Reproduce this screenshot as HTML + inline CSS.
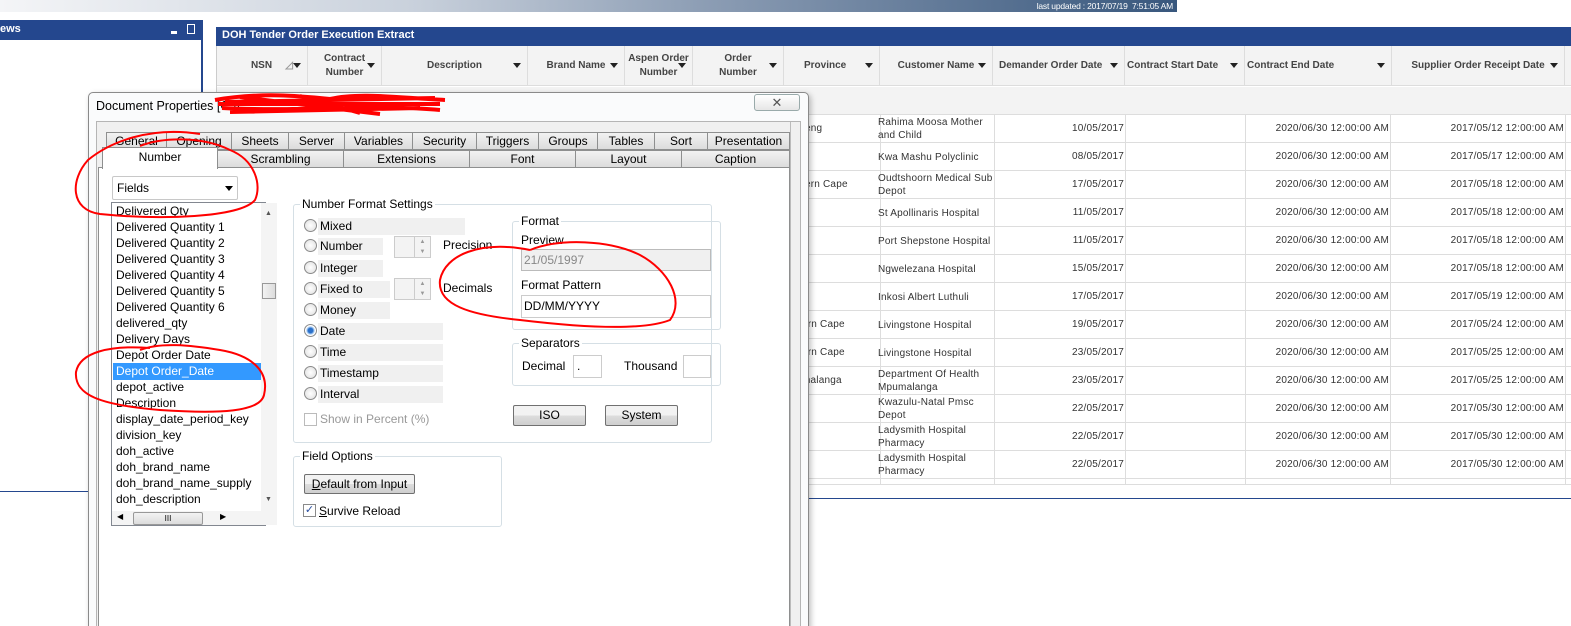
<!DOCTYPE html>
<html><head><meta charset="utf-8"><style>
*{box-sizing:border-box;margin:0;padding:0}
html,body{width:1571px;height:626px;overflow:hidden}
body{position:relative;background:#fff;font-family:"Liberation Sans",sans-serif;font-size:12px;color:#000}
.a{position:absolute}
.g{font-size:10px;color:#333;letter-spacing:0.2px}
.hd{position:absolute;top:46px;height:40px;border-right:1px solid #ddd;display:flex;align-items:center;justify-content:center;text-align:center;font-weight:bold;font-size:10px;color:#444;line-height:14px}
.arr{position:absolute;right:6px;top:17px;width:0;height:0;border-left:4px solid transparent;border-right:4px solid transparent;border-top:5px solid #222}
.tab{position:absolute;height:18px;border:1px solid #8e8f8f;background:linear-gradient(#f2f2f2,#dcdcdc);text-align:center;font-size:12px;line-height:16px}
.rad{position:absolute;left:304px;width:13px;height:13px;border-radius:50%;border:1px solid #8a8a8a;background:radial-gradient(#fff,#ddd)}
.rl{position:absolute;left:318px;height:17px;background:#f0f0f0;padding-left:2px;line-height:17px}
.grp{position:absolute;border:1px solid #d5dfe5;border-radius:3px}
.gt{position:absolute;background:#fff;padding:0 2px;line-height:14px}
.btn{position:absolute;border:1px solid #707070;border-radius:2px;background:linear-gradient(#f2f2f2 50%,#dddddd 50%,#cfcfcf);text-align:center;line-height:18px}
.li{position:absolute;left:116px;line-height:16px}
</style></head><body>
<!-- top bar -->
<div class="a" style="left:0;top:0;width:1177px;height:12px;background:linear-gradient(90deg,#f4f5f7 0%,#c9d1dc 35%,#8c9db4 60%,#38577d 100%)"></div>
<div class="a" style="right:398px;top:1px;font-size:8.5px;color:#fff;line-height:10px;white-space:nowrap;letter-spacing:-0.2px">last updated : 2017/07/19 &nbsp;7:51:05 AM</div>

<!-- left panel -->
<div class="a" style="left:0;top:20px;width:203px;height:20px;background:#24478e"></div>
<div class="a" style="left:0;top:23px;color:#fff;font-weight:bold;font-size:11px">ews</div>
<div class="a" style="left:171px;top:31px;width:6px;height:3px;background:#fff"></div>
<div class="a" style="left:187px;top:24px;width:8px;height:10px;border:1px solid #fff"></div>
<div class="a" style="left:201px;top:40px;width:2px;height:60px;background:#24478e"></div>
<div class="a" style="left:0;top:491px;width:90px;height:1px;background:#24478e"></div>

<!-- grid panel -->
<div class="a" style="left:216px;top:27px;width:1355px;height:19px;background:#24478e"></div>
<div class="a" style="left:222px;top:29px;color:#fff;font-weight:bold;font-size:11px">DOH Tender Order Execution Extract</div>
<div class="a" style="left:216px;top:46px;width:1355px;height:40px;background:#f3f3f3;border-bottom:1px solid #ddd"></div>
<div class="a" style="left:216px;top:87px;width:1355px;height:28px;background:#f3f3f3;border-bottom:1px solid #ddd"></div>
<div class="a" style="left:216px;top:46px;width:1px;height:440px;background:#ccc"></div>

<div class="hd" style="left:216px;width:92px">NSN<span style="position:absolute;right:14px;color:#999">◿</span><i class="arr"></i></div>
<div class="hd" style="left:308px;width:74px">Contract<br>Number<i class="arr"></i></div>
<div class="hd" style="left:382px;width:146px">Description<i class="arr"></i></div>
<div class="hd" style="left:528px;width:97px">Brand Name<i class="arr"></i></div>
<div class="hd" style="left:625px;width:68px">Aspen Order<br>Number<i class="arr"></i></div>
<div class="hd" style="left:693px;width:91px">Order<br>Number<i class="arr"></i></div>
<div class="hd" style="left:784px;width:96px;justify-content:flex-start;padding-left:20px">Province<i class="arr"></i></div>
<div class="hd" style="left:880px;width:113px">Customer Name<i class="arr"></i></div>
<div class="hd" style="left:993px;width:132px;justify-content:flex-start;padding-left:6px">Demander Order Date<i class="arr"></i></div>
<div class="hd" style="left:1125px;width:120px;justify-content:flex-start;padding-left:2px">Contract Start Date<i class="arr"></i></div>
<div class="hd" style="left:1245px;width:147px;justify-content:flex-start;padding-left:2px">Contract End Date<i class="arr"></i></div>
<div class="hd" style="left:1392px;width:173px">Supplier Order Receipt Date<i class="arr"></i></div>

<div id="rows"></div>
<div class="a" style="left:808px;top:498px;width:763px;height:1px;background:#24478e"></div>

<!-- dialog -->
<div class="a" style="left:88px;top:92px;width:721px;height:560px;background:#fafbfc;border:1px solid #8a8a8a;border-radius:5px 5px 0 0;box-shadow:2px 2px 6px rgba(0,0,0,.25)"></div>
<div class="a" style="left:96px;top:99px;font-size:12.5px">Document Properties [C:\\</div>
<div class="a" style="left:754px;top:94px;width:46px;height:17px;border:1px solid #9aa;border-radius:3px;background:linear-gradient(#fff,#e6e6e6);text-align:center;font-size:13px;line-height:15px;color:#555">✕</div>
<div class="a" style="left:96px;top:121px;width:705px;height:530px;border:1px solid #b5b5b5;background:#f0f0f0"></div>
<div class="a" style="left:98px;top:167px;width:692px;height:480px;background:#fff;border:1px solid #8e8f8f"></div>
<div class="a" style="left:790px;top:122px;width:1px;height:504px;background:#bbb"></div>

<div class="tab" style="left:106px;top:132px;width:61px">General</div>
<div class="tab" style="left:166px;top:132px;width:66px">Opening</div>
<div class="tab" style="left:231px;top:132px;width:58px">Sheets</div>
<div class="tab" style="left:288px;top:132px;width:57px">Server</div>
<div class="tab" style="left:344px;top:132px;width:69px">Variables</div>
<div class="tab" style="left:412px;top:132px;width:65px">Security</div>
<div class="tab" style="left:476px;top:132px;width:63px">Triggers</div>
<div class="tab" style="left:538px;top:132px;width:60px">Groups</div>
<div class="tab" style="left:597px;top:132px;width:58px">Tables</div>
<div class="tab" style="left:654px;top:132px;width:54px">Sort</div>
<div class="tab" style="left:707px;top:132px;width:83px">Presentation</div>
<div class="tab" style="left:217px;top:150px;width:127px">Scrambling</div>
<div class="tab" style="left:343px;top:150px;width:127px">Extensions</div>
<div class="tab" style="left:469px;top:150px;width:107px">Font</div>
<div class="tab" style="left:575px;top:150px;width:107px">Layout</div>
<div class="tab" style="left:681px;top:150px;width:109px">Caption</div>
<div class="a" style="left:102px;top:147px;width:116px;height:22px;background:#fff;border:1px solid #8e8f8f;border-bottom:none;text-align:center;line-height:18px">Number</div>

<!-- fields dropdown -->
<div class="a" style="left:112px;top:176px;width:126px;height:24px;border:1px solid #c8c8c8;border-radius:2px;background:#fff;line-height:22px;padding-left:4px">Fields</div>
<div class="a" style="left:225px;top:186px;border-left:4px solid transparent;border-right:4px solid transparent;border-top:5px solid #000"></div>
<div class="a" style="left:111px;top:202px;width:155px;height:324px;border:1px solid #828790;background:#fff"></div>
<div class="a" style="left:261px;top:203px;width:16px;height:308px;background:#f4f4f4"></div>
<div class="a" style="left:262px;top:283px;width:14px;height:16px;border:1px solid #999;background:linear-gradient(90deg,#f3f3f3,#dcdcdc)"></div>
<div class="a" style="left:265px;top:210px;font-size:7px;color:#555">▲</div>
<div class="a" style="left:265px;top:496px;font-size:7px;color:#555">▼</div>
<div class="a" style="left:112px;top:511px;width:165px;height:14px;background:#f4f4f4"></div>
<div class="a" style="left:133px;top:512px;width:70px;height:13px;border:1px solid #999;border-radius:2px;background:linear-gradient(#f3f3f3,#dcdcdc);font-size:8px;text-align:center;line-height:11px">III</div>
<div class="a" style="left:117px;top:512px;font-size:8px">◀</div>
<div class="a" style="left:220px;top:512px;font-size:8px">▶</div>
<div class="a" style="left:113px;top:363px;width:148px;height:17px;background:#3399ff"></div>
<div class="li" style="top:203px">Delivered Qty</div>
<div class="li" style="top:219px">Delivered Quantity 1</div>
<div class="li" style="top:235px">Delivered Quantity 2</div>
<div class="li" style="top:251px">Delivered Quantity 3</div>
<div class="li" style="top:267px">Delivered Quantity 4</div>
<div class="li" style="top:283px">Delivered Quantity 5</div>
<div class="li" style="top:299px">Delivered Quantity 6</div>
<div class="li" style="top:315px">delivered_qty</div>
<div class="li" style="top:331px">Delivery Days</div>
<div class="li" style="top:347px">Depot Order Date</div>
<div class="li" style="top:363px;color:#fff">Depot Order_Date</div>
<div class="li" style="top:379px">depot_active</div>
<div class="li" style="top:395px">Description</div>
<div class="li" style="top:411px">display_date_period_key</div>
<div class="li" style="top:427px">division_key</div>
<div class="li" style="top:443px">doh_active</div>
<div class="li" style="top:459px">doh_brand_name</div>
<div class="li" style="top:475px">doh_brand_name_supply</div>
<div class="li" style="top:491px">doh_description</div>

<!-- Number format settings -->
<div class="grp" style="left:293px;top:204px;width:419px;height:239px"></div>
<div class="gt" style="left:300px;top:197px">Number Format Settings</div>
<div class="rl" style="top:218px;width:147px">Mixed</div>
<div class="rl" style="top:238px;width:65px">Number</div>
<div class="rl" style="top:260px;width:65px">Integer</div>
<div class="rl" style="top:281px;width:72px">Fixed to</div>
<div class="rl" style="top:302px;width:72px">Money</div>
<div class="rl" style="top:323px;width:125px">Date</div>
<div class="rl" style="top:344px;width:125px">Time</div>
<div class="rl" style="top:365px;width:125px">Timestamp</div>
<div class="rl" style="top:386px;width:125px">Interval</div>
<div class="rad" style="top:219px"></div><div class="rad" style="top:239px"></div><div class="rad" style="top:261px"></div><div class="rad" style="top:282px"></div><div class="rad" style="top:303px"></div>
<div class="rad" style="top:324px;background:radial-gradient(#2a6fc9 30%,#9cc3ee 45%,#fff 60%)"></div>
<div class="rad" style="top:345px"></div><div class="rad" style="top:366px"></div><div class="rad" style="top:387px"></div>
<div class="a" style="left:394px;top:236px;width:37px;height:22px;border:1px solid #ccc;background:#f3f3f3"></div>
<div class="a" style="left:414px;top:237px;width:16px;height:20px;border-left:1px solid #ccc;font-size:6px;color:#999;text-align:center;line-height:10px">▲<br>▼</div>
<div class="a" style="left:394px;top:278px;width:37px;height:22px;border:1px solid #ccc;background:#f3f3f3"></div>
<div class="a" style="left:414px;top:279px;width:16px;height:20px;border-left:1px solid #ccc;font-size:6px;color:#999;text-align:center;line-height:10px">▲<br>▼</div>
<div class="a" style="left:443px;top:238px">Precision</div>
<div class="a" style="left:443px;top:281px">Decimals</div>
<div class="a" style="left:304px;top:413px;width:13px;height:13px;border:1px solid #bbb"></div>
<div class="a" style="left:320px;top:412px;color:#999">Show in Percent (%)</div>

<div class="grp" style="left:512px;top:221px;width:209px;height:109px"></div>
<div class="gt" style="left:519px;top:214px">Format</div>
<div class="a" style="left:521px;top:233px">Preview</div>
<div class="a" style="left:521px;top:249px;width:190px;height:22px;border:1px solid #bbb;background:#f0f0f0;color:#888;padding-left:2px;line-height:20px">21/05/1997</div>
<div class="a" style="left:521px;top:278px">Format Pattern</div>
<div class="a" style="left:521px;top:295px;width:190px;height:23px;border:1px solid #ccc;background:#fff;padding-left:2px;line-height:21px">DD/MM/YYYY</div>
<div class="grp" style="left:512px;top:343px;width:209px;height:43px"></div>
<div class="gt" style="left:519px;top:336px">Separators</div>
<div class="a" style="left:522px;top:359px">Decimal</div>
<div class="a" style="left:573px;top:355px;width:29px;height:23px;border:1px solid #ccc;padding-left:3px;line-height:20px">.</div>
<div class="a" style="left:624px;top:359px">Thousand</div>
<div class="a" style="left:683px;top:355px;width:28px;height:23px;border:1px solid #ccc"></div>
<div class="btn" style="left:513px;top:405px;width:73px;height:21px">ISO</div>
<div class="btn" style="left:605px;top:405px;width:73px;height:21px">System</div>

<div class="grp" style="left:293px;top:456px;width:209px;height:71px"></div>
<div class="gt" style="left:300px;top:449px">Field Options</div>
<div class="btn" style="left:304px;top:474px;width:111px;height:20px"><u>D</u>efault from Input</div>
<div class="a" style="left:303px;top:504px;width:13px;height:13px;border:1px solid #8a8a8a;background:#fff;font-size:11px;line-height:11px;color:#2a4f9f;text-align:center">✓</div>
<div class="a" style="left:319px;top:504px"><u>S</u>urvive Reload</div>

<!-- red scribbles -->
<svg class="a" style="left:0;top:0" width="1571" height="626" viewBox="0 0 1571 626">
<g fill="none" stroke="#f00" stroke-width="2">
<path d="M215 100 C260 92 300 96 330 99 C360 92 400 98 445 100 M218 104 L440 104 M222 108 C300 112 380 104 440 110 M230 112 L420 108 M240 97 L380 114 M300 96 L360 113 M225 102 L435 98" stroke-width="4"/>
<path d="M200 134 C150 126 110 142 88 160 C70 180 70 210 100 214 C160 220 240 218 255 200 C262 185 255 160 230 150 C200 135 160 138 140 146"/>
<path d="M150 348 C110 345 80 352 76 372 C74 395 100 405 160 410 C220 414 260 412 264 395 C270 370 250 355 220 350 C190 345 160 342 140 350"/>
<path d="M530 250 C480 240 445 255 440 280 C437 305 470 315 520 320 C570 326 640 332 670 320 C685 300 668 270 640 255 C610 240 560 238 530 250"/>
</g></svg>

<script>
var d=[["teng","Rahima Moosa Mother|and Child","10/05/2017","2017/05/12"],["","Kwa Mashu Polyclinic","08/05/2017","2017/05/17"],["tern Cape","Oudtshoorn Medical Sub|Depot","17/05/2017","2017/05/18"],["","St Apollinaris Hospital","11/05/2017","2017/05/18"],["","Port Shepstone Hospital","11/05/2017","2017/05/18"],["","Ngwelezana Hospital","15/05/2017","2017/05/18"],["","Inkosi Albert Luthuli","17/05/2017","2017/05/19"],["ern Cape","Livingstone Hospital","19/05/2017","2017/05/24"],["ern Cape","Livingstone Hospital","23/05/2017","2017/05/25"],["malanga","Department Of Health|Mpumalanga","23/05/2017","2017/05/25"],["","Kwazulu-Natal Pmsc|Depot","22/05/2017","2017/05/30"],["","Ladysmith Hospital|Pharmacy","22/05/2017","2017/05/30"],["","Ladysmith Hospital|Pharmacy","22/05/2017","2017/05/30"],["","Western Cape Pharm","",""]];
var h="";
d.forEach(function(r,i){var t=115+i*28;var ht=i==13?6:28;
h+='<div class="a" style="left:808px;top:'+t+'px;width:763px;height:'+ht+'px;overflow:hidden;border-bottom:1px solid #ddd">';
h+='<div class="a" style="left:72px;top:0;width:1px;height:28px;background:#ddd"></div>';
[186,317,437,582,757].forEach(function(x){h+='<div class="a" style="left:'+x+'px;top:0;width:1px;height:28px;background:#ddd"></div>'});
h+='<div class="a g" style="left:-6px;top:8px">'+r[0]+'</div>';
h+='<div class="a g" style="left:70px;top:'+(r[1].indexOf("|")>=0?1:8)+'px;line-height:13px">'+r[1].replace("|","<br>")+'</div>';
h+='<div class="a g" style="left:186px;width:130px;text-align:right;top:8px">'+r[2]+'</div>';
if(r[3]){h+='<div class="a g" style="left:437px;width:144px;text-align:right;top:8px">2020/06/30 12:00:00 AM</div>';
h+='<div class="a g" style="left:582px;width:174px;text-align:right;top:8px">'+r[3]+' 12:00:00 AM</div>';}
h+='</div>';});
document.getElementById("rows").innerHTML=h;
</script>
</body></html>
